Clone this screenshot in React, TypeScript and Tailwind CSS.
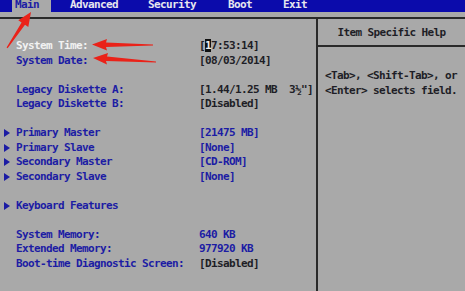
const tabs = ["Main", "Advanced", "Security", "Boot", "Exit"];

type Row =
  | { kind: "gap" }
  | { kind: "item"; label: string; value?: React.ReactNode; sub?: boolean; active?: boolean };

const rows: Row[] = [
  {
    kind: "item",
    label: "System Time:",
    active: true,
    value: (
      <>
        [<span className="bg-[#111] text-[#eee]">1</span>7:53:14]
      </>
    ),
  },
  { kind: "item", label: "System Date:", value: "[08/03/2014]" },
  { kind: "gap" },
  { kind: "item", label: "Legacy Diskette A:", value: "[1.44/1.25 MB  3½\"]" },
  { kind: "item", label: "Legacy Diskette B:", value: "[Disabled]" },
  { kind: "gap" },
  { kind: "item", sub: true, label: "Primary Master", value: <span className="text-[#1c1ca4]">[21475 MB]</span> },
  { kind: "item", sub: true, label: "Primary Slave", value: <span className="text-[#1c1ca4]">[None]</span> },
  { kind: "item", sub: true, label: "Secondary Master", value: <span className="text-[#1c1ca4]">[CD-ROM]</span> },
  { kind: "item", sub: true, label: "Secondary Slave", value: <span className="text-[#1c1ca4]">[None]</span> },
  { kind: "gap" },
  { kind: "item", sub: true, label: "Keyboard Features" },
  { kind: "gap" },
  { kind: "item", label: "System Memory:", value: <span className="text-[#1c1ca4]">640 KB</span> },
  { kind: "item", label: "Extended Memory:", value: <span className="text-[#1c1ca4]">977920 KB</span> },
  { kind: "item", label: "Boot-time Diagnostic Screen:", value: "[Disabled]" },
];

function Triangle() {
  return (
    <svg width="6" height="8" viewBox="0 0 6 8" className="ml-[4px]">
      <path d="M0 0 L6 4 L0 8 Z" fill="#1c1ca4" />
    </svg>
  );
}

export default function App() {
  return (
    <div className="relative h-[291px] w-[465px] overflow-hidden bg-[#a9a9a9] font-['DejaVu_Sans_Mono',monospace] text-[11px] font-bold tracking-[-0.62px]">
      {/* menu bar, top edge cropped like the photo */}
      <div className="flex h-[12px] overflow-hidden bg-[#0b0bab] pl-[12px] leading-[12px]">
        {tabs.map((t, i) => (
          <div
            key={t}
            className={
              i === 0
                ? "h-[12px] w-[39px] bg-[#a9a9a9] pl-[3px] text-[#1c1ca4]"
                : "text-[#e6e6ee]"
            }
          >
            <span
              className={
                "relative -top-[1px] " +
                (i === 1 ? "ml-[19px]" : i === 2 ? "ml-[30px]" : i === 3 ? "ml-[32px]" : i === 4 ? "ml-[31px]" : "")
              }
            >
              {t}
            </span>
          </div>
        ))}
      </div>

      {/* frame */}
      <div className="mt-[5px] flex h-[274px] border-t-[2px] border-[#2a2a2a]">
        <div className="w-[316px] pt-[20px] leading-[14.5px]">
          {rows.map((r, i) =>
            r.kind === "gap" ? (
              <div key={i} className="h-[14.5px]" />
            ) : (
              <div key={i} className="flex h-[14.5px] items-center">
                <div className="flex w-[16px] items-center">{r.sub && <Triangle />}</div>
                <div className={"w-[183px] whitespace-pre " + (r.active ? "text-[#f2f2f2]" : "text-[#1c1ca4]")}>
                  {r.label}
                </div>
                <div className="whitespace-pre text-[#1e1e26]">{r.value}</div>
              </div>
            ),
          )}
        </div>
        <div className="flex-1 border-l-[2px] border-[#2a2a2a] text-[#1e1e26]">
          <div className="flex h-[28px] items-center justify-center border-b-[2px] border-[#2a2a2a] pt-[2px]">
            Item Specific Help
          </div>
          <div className="whitespace-pre pt-[22px] pl-[7px] leading-[14.5px]">
            <div>{"<Tab>, <Shift-Tab>, or"}</div>
            <div>{"<Enter> selects field."}</div>
          </div>
        </div>
      </div>

      {/* red annotation arrows */}
      <svg className="pointer-events-none absolute inset-0" width="465" height="291">
        <polygon
          points="31,12 28.3,27 25,24.8 7.6,48.2 6.6,47.6 21.6,22.5 18.3,20.3"
          fill="#ea2219"
        />
        <polygon
          points="92,44.5 107,39 106,42.5 153,44.6 153,45.6 106,47 107,50.5"
          fill="#ea2219"
        />
        <polygon
          points="93,58 108,53 107,56.5 156,61.4 156,62.4 106,61 107,64.5"
          fill="#ea2219"
        />
      </svg>
    </div>
  );
}
